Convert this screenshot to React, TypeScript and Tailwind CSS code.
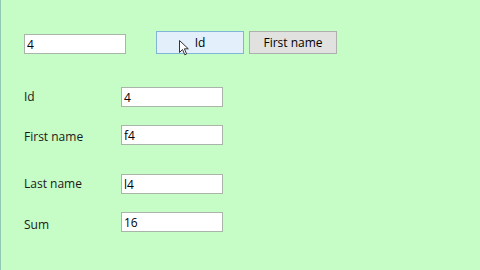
import { useState } from "react";

type Person = {
  id: number;
  firstName: string;
  lastName: string;
};

const fieldBox =
  "w-[102px] h-[20px] bg-white border border-[#a9b5a9] px-[2px] text-[12px] leading-[18px] text-black outline-none";

function Field({
  label,
  value,
  className,
  labelClass,
}: {
  label: string;
  value: string;
  className?: string;
  labelClass?: string;
}) {
  return (
    <div className={"flex items-start " + (className ?? "")}>
      <span className={"w-[97px] h-[20px] leading-[20px] text-[12px] text-[#1a1a1a] " + (labelClass ?? "")}>
        {label}
      </span>
      <input readOnly value={value} className={fieldBox} />
    </div>
  );
}

export default function App() {
  const [query, setQuery] = useState("4");
  const [person] = useState<Person>({ id: 4, firstName: "f4", lastName: "l4" });

  return (
    <div
      className="w-[480px] h-[270px] bg-[#c6fcc5] border-l border-[#8fc9b4] overflow-hidden relative"
      style={{ fontFamily: '"Open Sans", "Noto Sans", sans-serif' }}
    >
      <div className="flex items-start pl-[23px] pt-[31px]">
        <input
          value={query}
          onChange={(e) => setQuery(e.target.value)}
          className={fieldBox + " mt-[3px]"}
        />
        <button className="ml-[30px] w-[88px] h-[23px] bg-[#e3f0fb] border border-[#7fb6d6] text-[12px] text-black">
          Id
        </button>
        <button className="ml-[5px] w-[88px] h-[23px] bg-[#e1e2e0] border border-[#adb0ad] text-[12px] text-black">
          First name
        </button>
      </div>

      <div className="flex flex-col pl-[23px] pt-[33px]">
        <Field label="Id" value={String(person.id)} />
        <Field
          label="First name"
          value={person.firstName}
          className="mt-[18px]"
          labelClass="mt-[2px] -mb-[2px]"
        />
        <Field label="Last name" value={person.lastName} className="mt-[29px]" />
        <Field
          label="Sum"
          value={String(person.id * 4)}
          className="mt-[18px]"
          labelClass="mt-[3px] -mb-[3px]"
        />
      </div>

      {/* mouse pointer over the Id button */}
      <svg className="absolute left-[178px] top-[40px]" width="10" height="16" viewBox="0 0 10 16">
        <path d="M0.5 0.5 L0.5 12.5 L3.5 9.5 L5.8 14.8 L7.6 14 L5.4 8.8 L9.3 8.8 Z" fill="#fff" stroke="#333" strokeWidth="1" />
      </svg>
    </div>
  );
}
